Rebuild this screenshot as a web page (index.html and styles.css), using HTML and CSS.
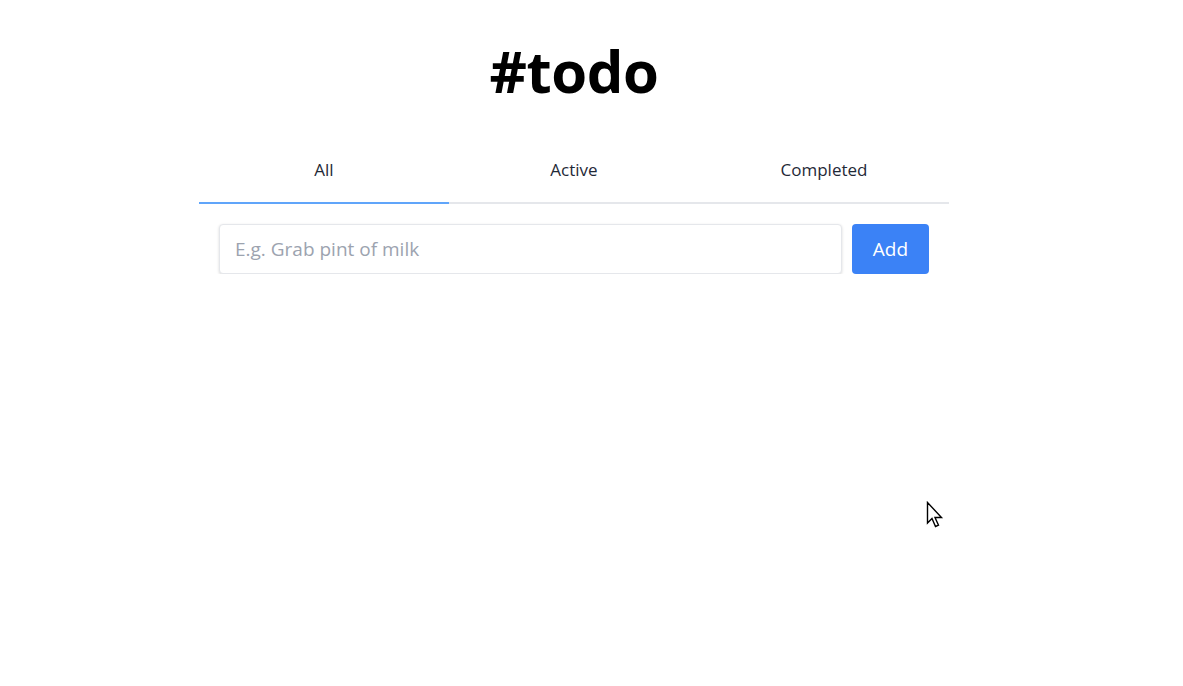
FILE: index.html
```html
<!DOCTYPE html>
<html lang="en">
<head>
<meta charset="utf-8">
<title>#todo</title>
<link rel="stylesheet" href="styles.css">
</head>
<body>
<div class="page">
  <main class="app">
    <h1 class="title">#todo</h1>
    <nav class="tabs">
      <div class="tab active">All</div>
      <div class="tab">Active</div>
      <div class="tab">Completed</div>
    </nav>
    <form class="add-form">
      <input class="add-input" type="text" placeholder="E.g. Grab pint of milk">
      <button class="add-btn" type="button">Add</button>
    </form>
  </main>
</div>
<svg class="cursor" width="18" height="30" viewBox="0 0 18 30" xmlns="http://www.w3.org/2000/svg">
  <path d="M1.5 1.5 V22 L6 17.5 L9.5 25.5 L12.5 24.2 L9 16.5 H15.5 Z" fill="#fff" stroke="#000" stroke-width="1.4" stroke-linejoin="miter"/>
</svg>
</body>
</html>
```
FILE: styles.css
```css
* { box-sizing: border-box; }
html, body { margin: 0; padding: 0; background: #fff; }
body {
  font-family: "Open Sans", "Noto Sans", "Liberation Sans", sans-serif;
  color: #1f2937;
}
.page {
  width: 1148px;
  display: flex;
  justify-content: center;
}
.app {
  width: 750px;
  display: flex;
  flex-direction: column;
}
.title {
  margin: 31px 0 0;
  text-align: center;
  font-size: 58px;
  line-height: 80px;
  font-weight: 700;
  color: #000;
  letter-spacing: -0.4px;
}
.tabs {
  margin-top: 41px;
  display: flex;
  border-bottom: 2px solid #e5e7eb;
}
.tab {
  flex: 1;
  text-align: center;
  font-size: 17px;
  line-height: 24px;
  padding: 6px 0 20px;
  margin-bottom: -2px;
  border-bottom: 2px solid transparent;
  color: #1f2937;
}
.tab.active { border-bottom-color: #60a5fa; }
.add-form {
  margin: 20px 20px 0;
  display: flex;
  gap: 10px;
}
.add-input {
  flex: 1;
  height: 50px;
  border: 1px solid #e5e7eb;
  border-radius: 4px;
  box-shadow: 0 1px 3px rgba(0,0,0,0.15);
  padding: 0 15px;
  font-family: inherit;
  font-size: 19px;
  color: #1f2937;
  outline: none;
}
.add-input::placeholder { color: #9ca3af; }
.add-btn {
  width: 77px;
  height: 50px;
  border: none;
  border-radius: 4px;
  background: #3b82f6;
  color: #fff;
  font-family: inherit;
  font-size: 19px;
}
.cursor {
  position: absolute;
  left: 926px;
  top: 501px;
}
```
